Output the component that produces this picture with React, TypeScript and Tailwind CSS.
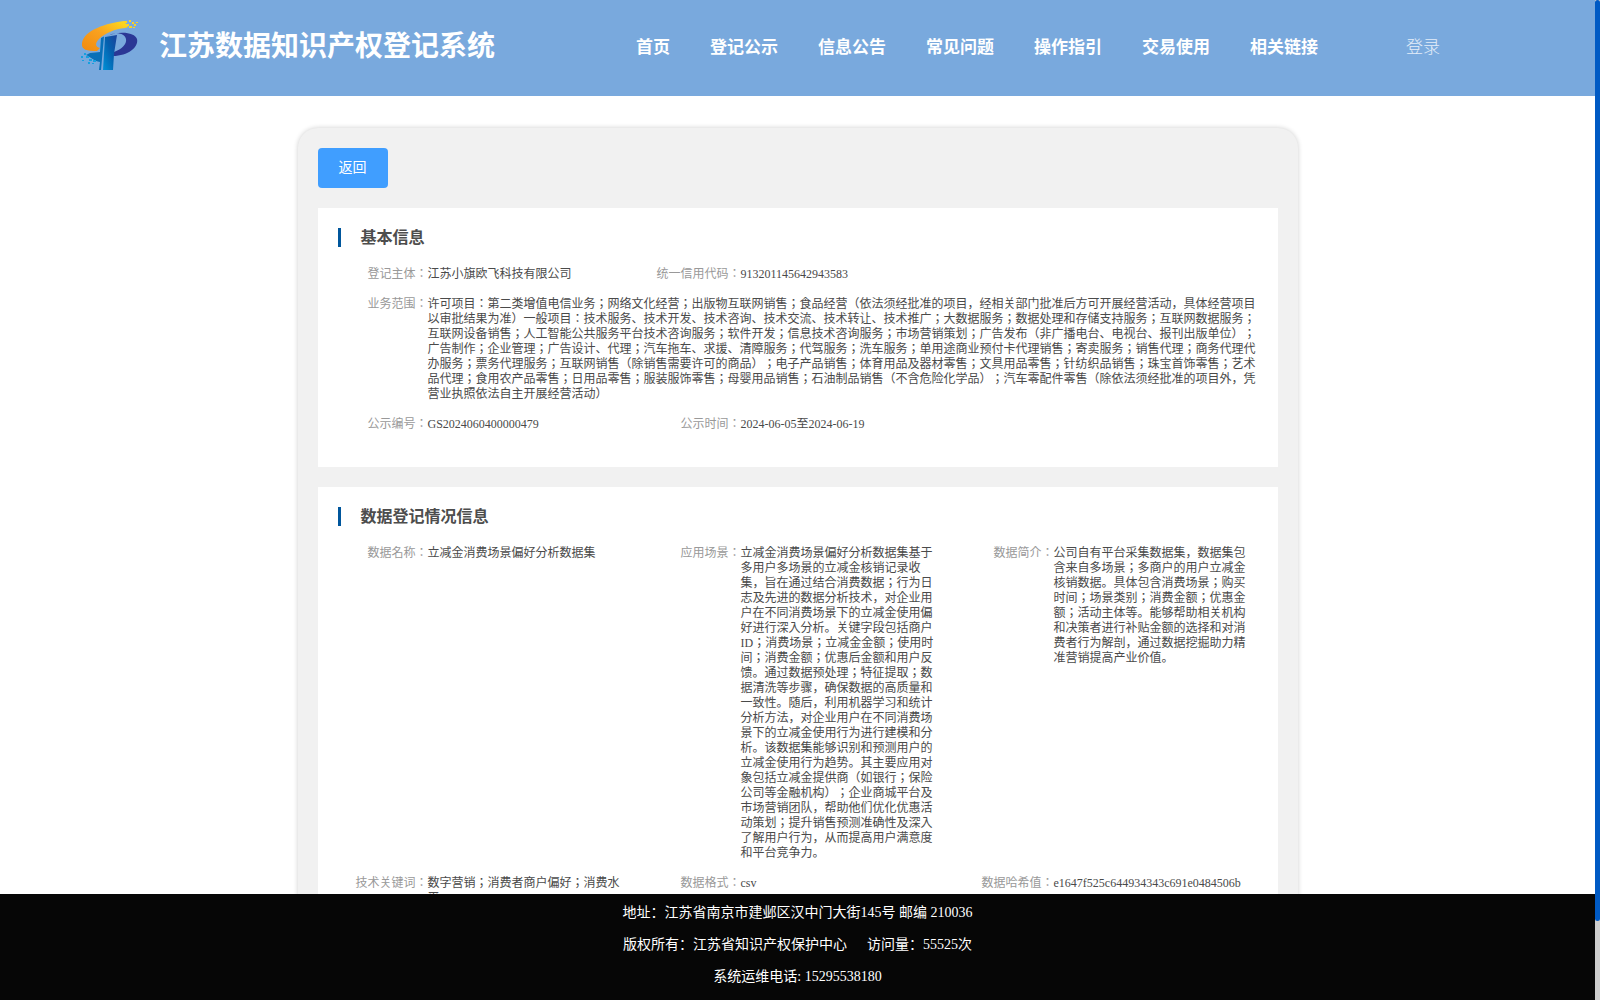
import { clsx } from 'clsx';

interface Field {
  label: string;
  value: string;
  wide?: boolean;
}

const navItems = ['首页', '登记公示', '信息公告', '常见问题', '操作指引', '交易使用', '相关链接'];

const basicInfo: Field[][] = [
  [
    { label: '登记主体', value: '江苏小旗欧飞科技有限公司' },
    { label: '统一信用代码', value: '913201145642943583' },
  ],
  [
    {
      label: '业务范围',
      wide: true,
      value:
        '许可项目：第二类增值电信业务；网络文化经营；出版物互联网销售；食品经营（依法须经批准的项目，经相关部门批准后方可开展经营活动，具体经营项目以审批结果为准）一般项目：技术服务、技术开发、技术咨询、技术交流、技术转让、技术推广；大数据服务；数据处理和存储支持服务；互联网数据服务；互联网设备销售；人工智能公共服务平台技术咨询服务；软件开发；信息技术咨询服务；市场营销策划；广告发布（非广播电台、电视台、报刊出版单位）；广告制作；企业管理；广告设计、代理；汽车拖车、求援、清障服务；代驾服务；洗车服务；单用途商业预付卡代理销售；寄卖服务；销售代理；商务代理代办服务；票务代理服务；互联网销售（除销售需要许可的商品）；电子产品销售；体育用品及器材零售；文具用品零售；针纺织品销售；珠宝首饰零售；艺术品代理；食用农产品零售；日用品零售；服装服饰零售；母婴用品销售；石油制品销售（不含危险化学品）；汽车零配件零售（除依法须经批准的项目外，凭营业执照依法自主开展经营活动）',
    },
  ],
  [
    { label: '公示编号', value: 'GS2024060400000479' },
    { label: '公示时间', value: '2024-06-05至2024-06-19' },
  ],
];

const dataInfo: Field[][] = [
  [
    { label: '数据名称', value: '立减金消费场景偏好分析数据集' },
    {
      label: '应用场景',
      value:
        '立减金消费场景偏好分析数据集基于多用户多场景的立减金核销记录收集，旨在通过结合消费数据；行为日志及先进的数据分析技术，对企业用户在不同消费场景下的立减金使用偏好进行深入分析。关键字段包括商户ID；消费场景；立减金金额；使用时间；消费金额；优惠后金额和用户反馈。通过数据预处理；特征提取；数据清洗等步骤，确保数据的高质量和一致性。随后，利用机器学习和统计分析方法，对企业用户在不同消费场景下的立减金使用行为进行建模和分析。该数据集能够识别和预测用户的立减金使用行为趋势。其主要应用对象包括立减金提供商（如银行；保险公司等金融机构）；企业商城平台及市场营销团队，帮助他们优化优惠活动策划；提升销售预测准确性及深入了解用户行为，从而提高用户满意度和平台竞争力。',
    },
    {
      label: '数据简介',
      value:
        '公司自有平台采集数据集，数据集包含来自多场景；多商户的用户立减金核销数据。具体包含消费场景；购买时间；场景类别；消费金额；优惠金额；活动主体等。能够帮助相关机构和决策者进行补贴金额的选择和对消费者行为解剖，通过数据挖掘助力精准营销提高产业价值。',
    },
  ],
  [
    { label: '技术关键词', value: '数字营销；消费者商户偏好；消费水平' },
    { label: '数据格式', value: 'csv' },
    { label: '数据哈希值', value: 'e1647f525c644934343c691e0484506b' },
  ],
];

function Logo() {
  return (
    <svg width="60" height="54" viewBox="0 0 60 54" className="shrink-0">
      <defs>
        <linearGradient id="gold" x1="0" y1="1" x2="1" y2="0">
          <stop offset="0" stopColor="#f08a10" />
          <stop offset="0.5" stopColor="#f9a11f" />
          <stop offset="1" stopColor="#fde01c" />
        </linearGradient>
        <linearGradient id="stem" x1="0" y1="1" x2="1" y2="0">
          <stop offset="0" stopColor="#0091d6" />
          <stop offset="0.55" stopColor="#0560ae" />
          <stop offset="1" stopColor="#1c419b" />
        </linearGradient>
      </defs>
      <path
        d="M45 3 C28 5 5 12 3 25 C2 32 8 33 18 33 L21 30 C16 29 16 25 20 21 C26 15 36 11 46 10 L49 9 L47 6 Z"
        fill="url(#gold)"
      />
      <path d="M45 3h3v2h-3zM50 2h2v2h-2zM47 6h3v2h-3zM53 4h2v2h-2zM50 8h3v2h-3zM55 6h2v2h-2zM57 4h2v1h-2zM54 9h2v1h-2z" fill="#fbd321" />
      <path d="M26 19 C39 12 56 14 58 21 C60 29 49 38 34 38 L35 34 C43 31 48 26 47 21 C46 16 39 14 33 16 Z" fill="#2b3795" />
      <path d="M26 19 L38 17 L35 36 L34 52 L24 52 Z" fill="url(#stem)" />
      <path d="M22 20 L25 18.500 L22 52 L20 52 L21 44 C15 43 13 40 7 37 L11 35 L21 34 Z" fill="#0870b8" />
      <path d="M2 38h2v2h-2zM5 35h2v2h-2zM7 38h3v2h-3zM3 42h2v1h-2zM10 41h3v2h-3zM9 44h2v2h-2zM14 42h3v2h-3zM13 45h2v1h-2z" fill="#16a0df" />
    </svg>
  );
}

function FieldItem({ label, value, wide }: Field) {
  return (
    <div className={clsx('flex shrink-0', wide ? 'w-full' : 'w-[313px]')}>
      <div className="w-[89px] shrink-0 text-right whitespace-nowrap text-[#999]">
        <span className="-ml-3">{label}：</span>
      </div>
      <div className={clsx('shrink-0 text-[#4a4a4a]', wide ? 'w-[831px]' : 'w-[196px]')}>{value}</div>
    </div>
  );
}

function Section({ title, rows }: { title: string; rows: Field[][] }) {
  return (
    <section className="bg-white px-5 pt-5 pb-5">
      <div className="flex h-[19px] items-center border-l-3 border-[#00569c] pl-5">
        <h3 className="text-base leading-[19px] font-bold text-[#4d4d4d]">{title}</h3>
      </div>
      <div className="pt-5 pl-px text-xs leading-[15px] [text-spacing-trim:space-all]">
        {rows.map((row) => (
          <div key={row[0].label} className="mb-[15px] flex">
            {row.map((field) => (
              <FieldItem key={field.label} {...field} />
            ))}
          </div>
        ))}
      </div>
    </section>
  );
}

export default function App() {
  return (
    <div className="flex h-[1000px] w-[1600px] overflow-hidden bg-white font-['Liberation_Serif','Noto_Sans_CJK_JP',serif]">
      <div className="flex w-[1595px] flex-col">
        <header className="flex h-24 shrink-0 bg-[#79a9dd] pl-[79px] font-['Noto_Sans_CJK_SC',sans-serif] text-white">
          <div className="flex h-[90px] w-[557px] items-center">
            <Logo />
            <h1 className="mb-[3px] ml-5 text-[28px] leading-none font-bold">江苏数据知识产权登记系统</h1>
          </div>
          <nav className="flex h-[92px] items-center gap-10 text-[17px] font-bold">
            {navItems.map((item) => (
              <a key={item}>{item}</a>
            ))}
          </nav>
          <a className="ml-[88px] flex h-[92px] items-center text-[17px] font-light text-white/80">登录</a>
        </header>

        <main className="flex min-h-0 flex-1 justify-center overflow-hidden pt-8">
          <div className="h-[1200px] w-[1000px] shrink-0 rounded-[20px] bg-[#f1f1f1] p-5 shadow-[0_0_5px_rgba(0,0,0,0.2)]">
            <button className="mb-5 block h-10 w-[70px] rounded bg-[#409eff] text-sm text-white">返回</button>
            <div className="flex flex-col gap-5">
              <Section title="基本信息" rows={basicInfo} />
              <Section title="数据登记情况信息" rows={dataInfo} />
            </div>
          </div>
        </main>

        <footer className="h-[106px] shrink-0 bg-[#060606] pt-[3px] text-center font-['Liberation_Serif','Noto_Sans_CJK_SC',serif] text-sm leading-8 text-white [text-spacing-trim:space-all]">
          <p>地址：江苏省南京市建邺区汉中门大街145号 邮编 210036</p>
          <p>
            版权所有：江苏省知识产权保护中心<span className="ml-5">访问量：55525次</span>
          </p>
          <p>系统运维电话: 15295538180</p>
        </footer>
      </div>

      {/* page scrollbar */}
      <div className="h-full w-[5px] bg-[#cdcdcd]">
        <div className="h-[921px] rounded-[3px] bg-[#005ac4]" />
      </div>
    </div>
  );
}
